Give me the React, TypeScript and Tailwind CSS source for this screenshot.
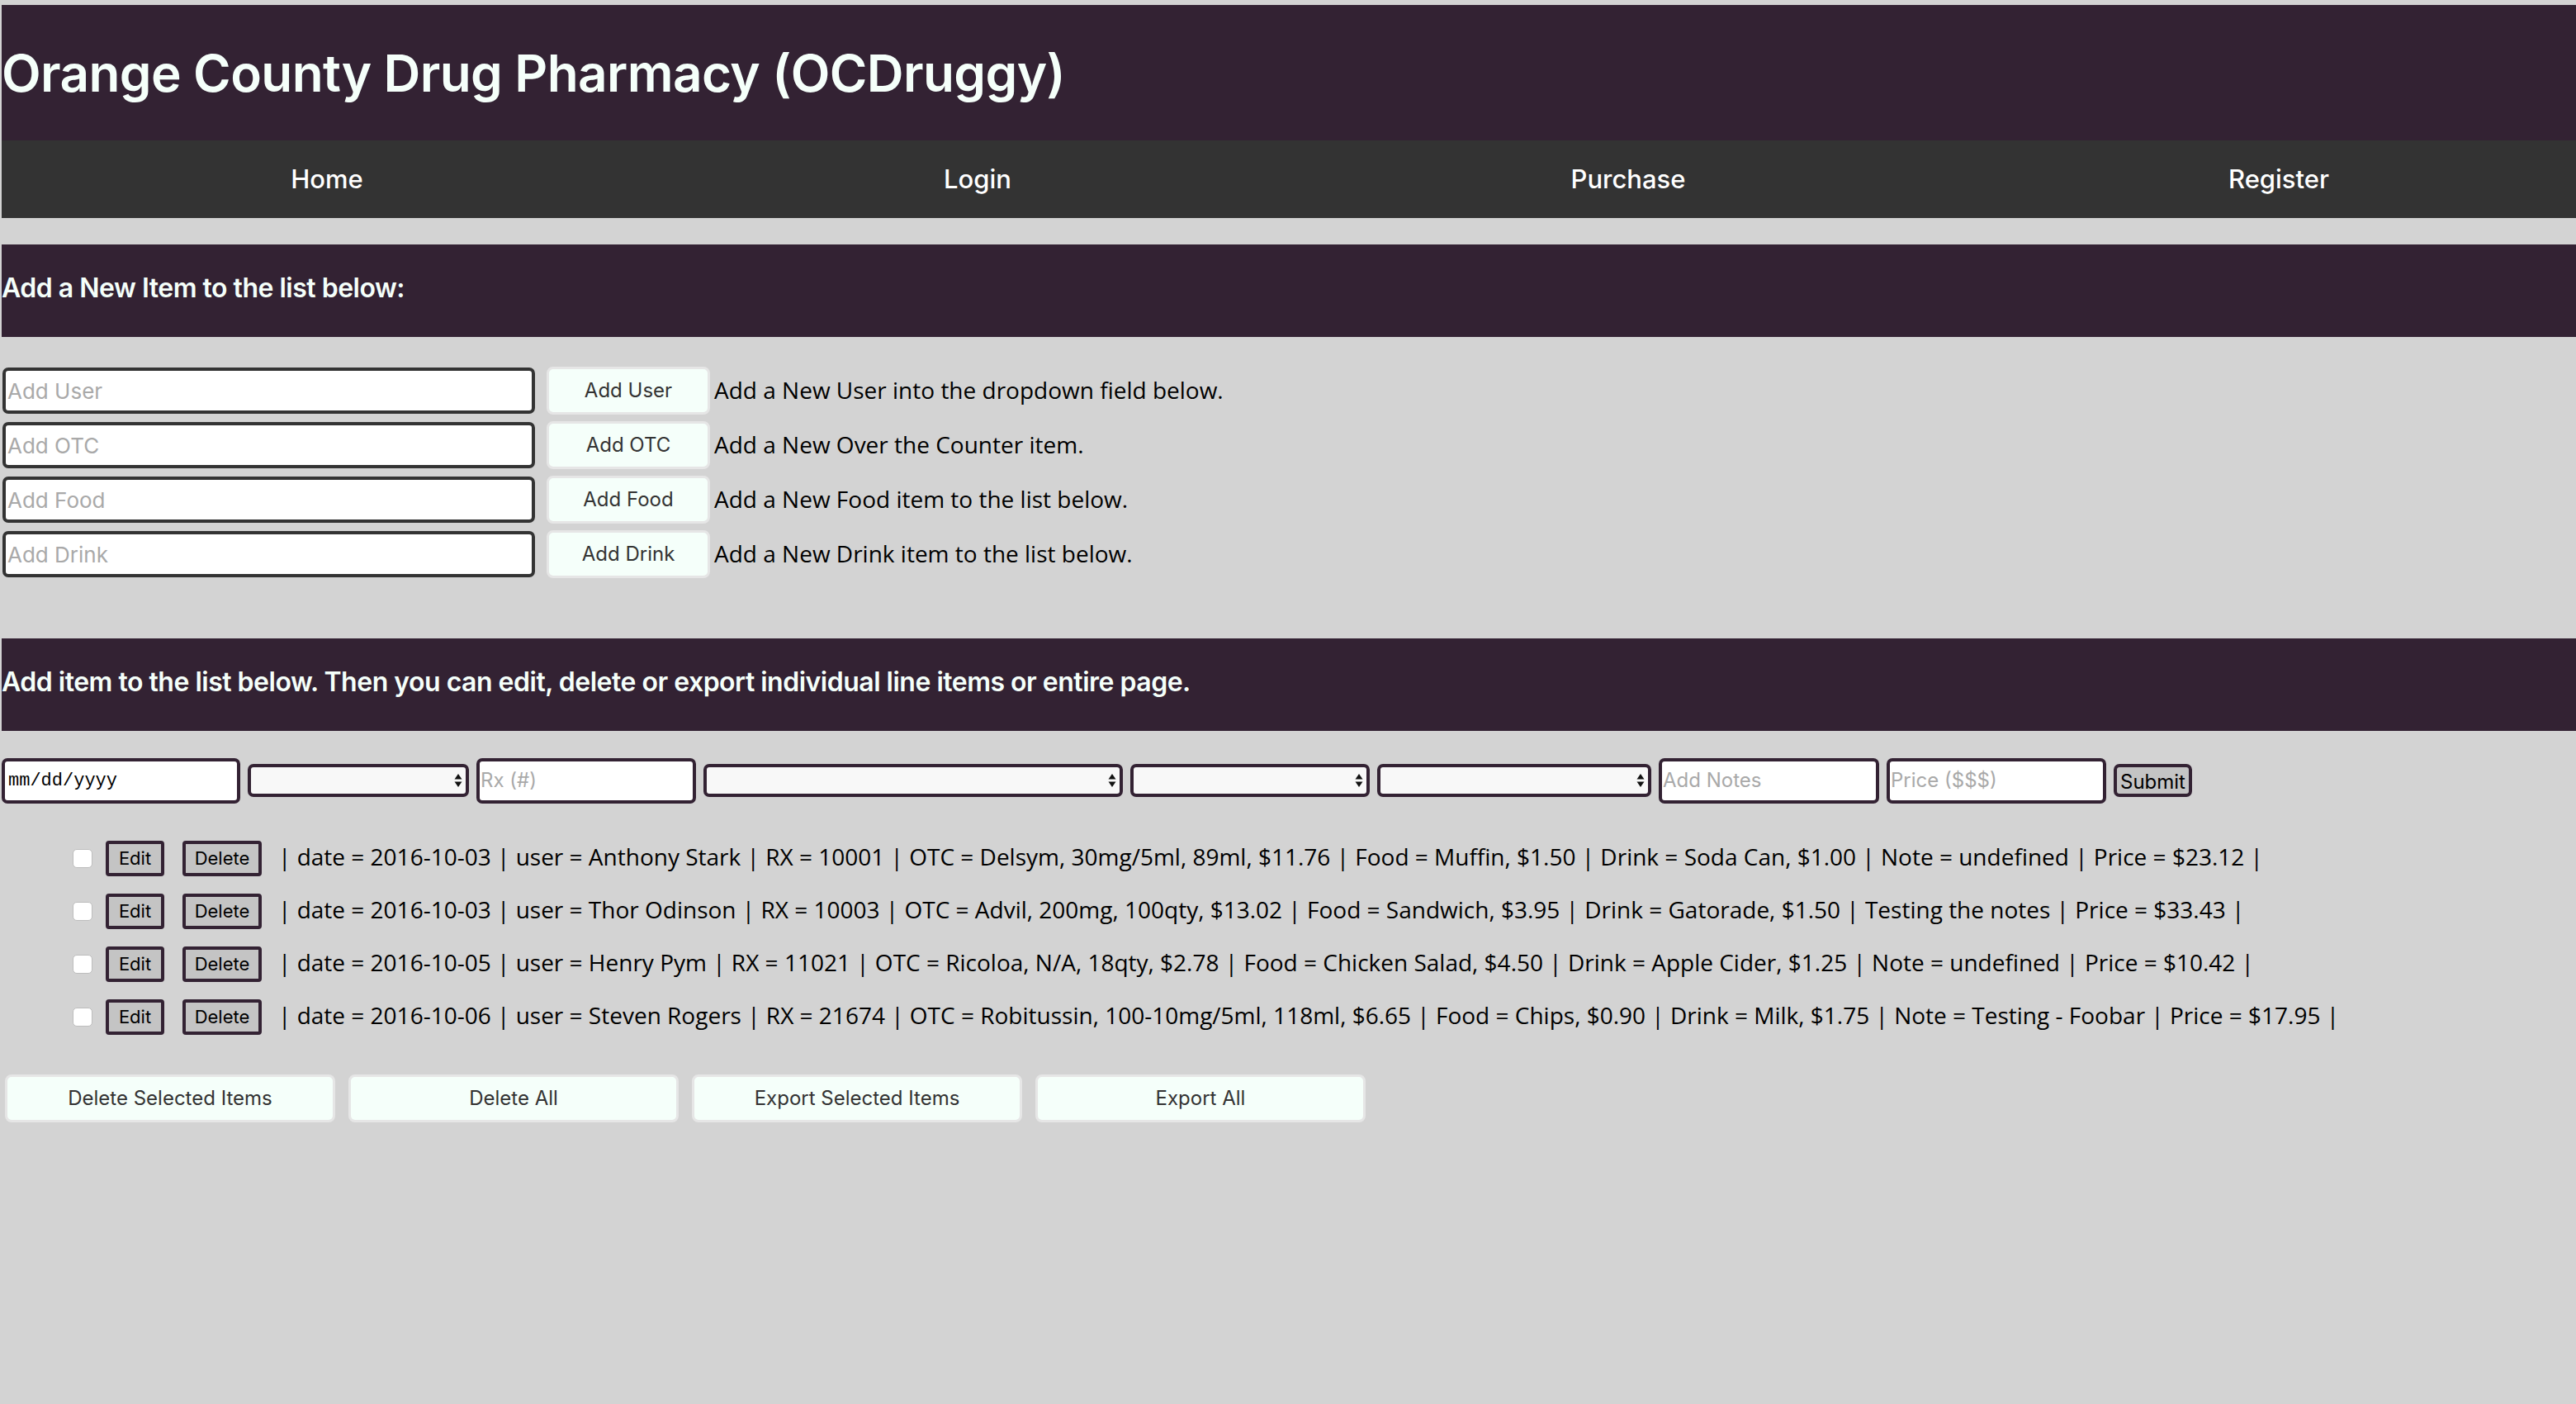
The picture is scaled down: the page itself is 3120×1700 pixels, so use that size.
import React from 'react';

const addRows = [
  { placeholder: 'Add User', label: 'Add User', note: 'Add a New User into the dropdown field below.' },
  { placeholder: 'Add OTC', label: 'Add OTC', note: 'Add a New Over the Counter item.' },
  { placeholder: 'Add Food', label: 'Add Food', note: 'Add a New Food item to the list below.' },
  { placeholder: 'Add Drink', label: 'Add Drink', note: 'Add a New Drink item to the list below.' },
];

const items = [
  '| date = 2016-10-03 | user = Anthony Stark | RX = 10001 | OTC = Delsym, 30mg/5ml, 89ml, $11.76 | Food = Muffin, $1.50 | Drink = Soda Can, $1.00 | Note = undefined | Price = $23.12 |',
  '| date = 2016-10-03 | user = Thor Odinson | RX = 10003 | OTC = Advil, 200mg, 100qty, $13.02 | Food = Sandwich, $3.95 | Drink = Gatorade, $1.50 | Testing the notes | Price = $33.43 |',
  '| date = 2016-10-05 | user = Henry Pym | RX = 11021 | OTC = Ricoloa, N/A, 18qty, $2.78 | Food = Chicken Salad, $4.50 | Drink = Apple Cider, $1.25 | Note = undefined | Price = $10.42 |',
  '| date = 2016-10-06 | user = Steven Rogers | RX = 21674 | OTC = Robitussin, 100-10mg/5ml, 118ml, $6.65 | Food = Chips, $0.90 | Drink = Milk, $1.75 | Note = Testing - Foobar | Price = $17.95 |',
];

const bottomActions = ['Delete Selected Items', 'Delete All', 'Export Selected Items', 'Export All'];

/** Fake select box with the up/down arrows seen in the screenshot. */
const SelectBox: React.FC<{ width: string }> = ({ width }) => (
  <div
    className={`${width} h-[40px] bg-[#f8f8f8] border-4 border-[#332233] rounded-[7px] flex items-center justify-end pr-[4px]`}
  >
    <svg width="10" height="18" viewBox="0 0 10 18">
      <path d="M5 1 L9.5 7.5 H0.5 Z" fill="#111" />
      <path d="M5 17 L9.5 10.5 H0.5 Z" fill="#111" />
    </svg>
  </div>
);

const TextBox: React.FC<{ width: string; placeholder: string }> = ({ width, placeholder }) => (
  <div
    className={`${width} h-[55px] bg-white border-4 border-[#332233] rounded-[7px] flex items-center px-[1px] text-[24px] text-[#a9a9a9] font-[Inter,sans-serif]`}
  >
    {placeholder}
  </div>
);

const Banner: React.FC<{ text: string; className?: string }> = ({ text, className = '' }) => (
  <section className={`h-[112px] bg-[#332233] flex items-center pb-[6px] ${className}`}>
    <h2 className="text-[32px] font-semibold text-[#f5fffa] tracking-[-0.5px] font-[Inter,sans-serif]">
      {text}
    </h2>
  </section>
);

const App: React.FC = () => {
  return (
    <div className="w-[3120px] h-[1700px] bg-[#d3d3d3] pt-[6px] pl-[2px] overflow-hidden">
      <header className="h-[164px] bg-[#332233] flex items-center">
        <h1 className="text-[62px] font-semibold text-[#f5fffa] tracking-[-0.6px] font-[Inter,sans-serif]">
          Orange County Drug Pharmacy (OCDruggy)
        </h1>
      </header>

      <nav className="h-[94px] bg-[#333333] flex font-[Inter,sans-serif]">
        {['Home', 'Login', 'Purchase', 'Register'].map((link) => (
          <div
            key={link}
            className="w-[788px] shrink-0 flex items-center justify-center text-[31px] font-medium text-white"
          >
            {link}
          </div>
        ))}
      </nav>

      <Banner className="mt-[32px]" text="Add a New Item to the list below:" />

      <div className="mt-[36px] flex flex-col gap-[8px]">
        {addRows.map((row) => (
          <div key={row.label} className="flex items-center h-[58px]">
            <div className="ml-[1px] w-[645px] h-[56px] bg-white border-4 border-[#333333] rounded-[7px] flex items-center px-[2px] text-[26px] text-[#a9a9a9] font-[Inter,sans-serif]">
              {row.placeholder}
            </div>
            <button className="ml-[14px] w-[198px] h-[58px] bg-[#f5fffa] border-[3px] border-[#e6e6e6] rounded-[8px] text-[24px] text-[#333333] font-[Inter,sans-serif]">
              {row.label}
            </button>
            <span className="ml-[5px] pb-[2px] text-[28px] text-black font-['Open_Sans',sans-serif]">
              {row.note}
            </span>
          </div>
        ))}
      </div>

      <Banner
        className="mt-[73px]"
        text="Add item to the list below. Then you can edit, delete or export individual line items or entire page."
      />

      <div className="mt-[32px] flex items-center gap-[9px] h-[56px]">
        <div className="w-[289px] h-[55px] bg-white border-4 border-[#332233] rounded-[7px] flex items-center px-[4px] text-[22px] text-black font-['Liberation_Mono',monospace]">
          mm/dd/yyyy
        </div>
        <SelectBox width="w-[268px]" />
        <TextBox width="w-[266px]" placeholder="Rx (#)" />
        <SelectBox width="w-[508px]" />
        <SelectBox width="w-[290px]" />
        <SelectBox width="w-[332px]" />
        <TextBox width="w-[267px]" placeholder="Add Notes" />
        <TextBox width="w-[266px]" placeholder="Price ($$$)" />
        <button className="w-[95px] h-[40px] bg-[#c4c4c4] border-4 border-[#332233] rounded-[7px] text-[24px] text-black font-[Inter,sans-serif]">
          Submit
        </button>
      </div>

      <ul className="mt-[45px] ml-[86px] flex flex-col gap-[21px]">
        {items.map((line, i) => (
          <li key={i} className="flex items-center h-[43px]">
            <span className="w-[24px] h-[23px] bg-white border border-[#bdbdbd] rounded-[5px]" />
            <button className="ml-[16px] w-[71px] h-[43px] bg-[#c4c4c4] border-4 border-[#332233] rounded-[4px] text-[22px] text-black font-[Inter,sans-serif]">
              Edit
            </button>
            <button className="ml-[22px] w-[96px] h-[43px] bg-[#c4c4c4] border-4 border-[#332233] rounded-[4px] text-[22px] text-black font-[Inter,sans-serif]">
              Delete
            </button>
            <span className="ml-[20px] pb-[6px] text-[28px] text-black whitespace-nowrap font-['Open_Sans',sans-serif]">
              {line}
            </span>
          </li>
        ))}
      </ul>

      <div className="mt-[48px] ml-[4px] flex gap-[16px]">
        {bottomActions.map((label) => (
          <button
            key={label}
            className="w-[400px] h-[58px] bg-[#f5fffa] border-[3px] border-[#e6e6e6] rounded-[8px] text-[24px] text-[#333333] font-[Inter,sans-serif]"
          >
            {label}
          </button>
        ))}
      </div>
    </div>
  );
};

export default App;
